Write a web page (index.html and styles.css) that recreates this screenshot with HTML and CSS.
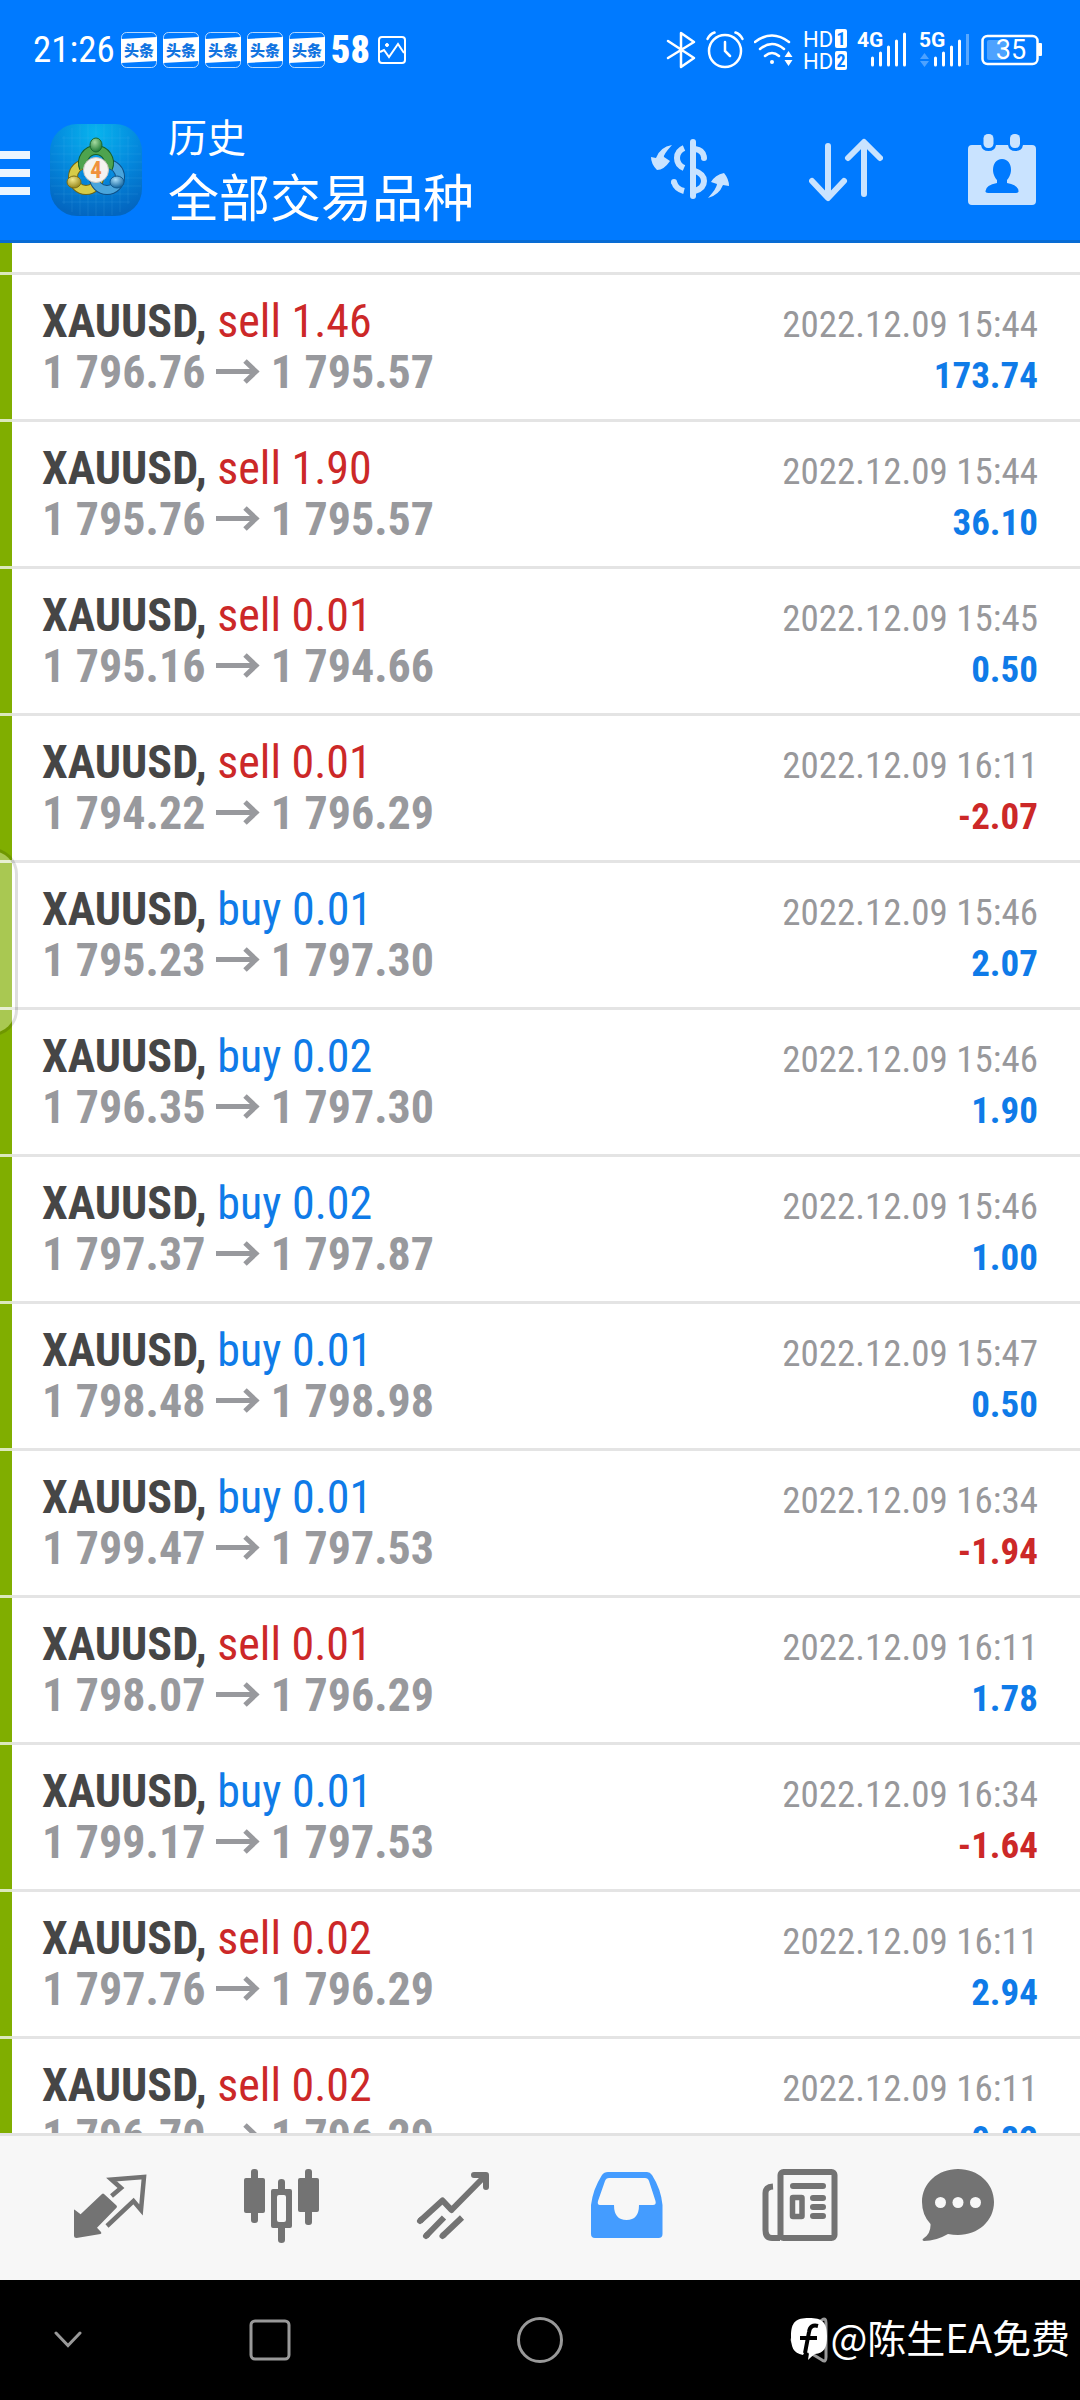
FILE: index.html
```html
<!DOCTYPE html>
<html lang="zh-CN">
<head>
<meta charset="utf-8">
<meta name="viewport" content="width=device-width, initial-scale=1">
<title>历史</title>
<link rel="stylesheet" href="styles.css">
</head>
<body>
<svg class="defs" aria-hidden="true">
  <symbol id="arrow" viewBox="0 0 44 30"><path d="M0 13.500H40M29 3L40 13.500L29 24" fill="none" stroke="currentColor" stroke-width="5"/></symbol>
  <symbol id="toutiao" viewBox="0 0 36 36">
    <rect x=".5" y=".5" width="35" height="35" rx="5" fill="none" stroke="#fff" stroke-opacity=".7"/>
    <path d="M0 7L36 5V29L0 31Z" fill="#fff"/>
    <text x="18" y="24" text-anchor="middle" class="toutiao-text">头条</text>
  </symbol>
</svg>

<div class="status">
  <span class="clock">21:26</span>
  <div class="notices">
    <svg width="36" height="36"><use href="#toutiao"/></svg>
    <svg width="36" height="36"><use href="#toutiao"/></svg>
    <svg width="36" height="36"><use href="#toutiao"/></svg>
    <svg width="36" height="36"><use href="#toutiao"/></svg>
    <svg width="36" height="36"><use href="#toutiao"/></svg>
    <span class="badge58">58</span>
    <svg width="28" height="28" viewBox="0 0 28 28" fill="none" stroke="#fff" stroke-width="2"><rect x="1" y="1" width="26" height="26" rx="3"/><path d="M2 16L6 14L11 21L20 8L26 17"/><circle cx="9" cy="9" r="1.500" fill="#fff" stroke-width="1"/></svg>
  </div>
  <div class="system">
    <svg width="30" height="40" viewBox="0 0 30 40" fill="none" stroke="#fff" stroke-width="2.500" stroke-linejoin="round" stroke-linecap="round"><path d="M2 11L28 28L15 37V3L28 12L2 28"/></svg>
    <svg width="38" height="40" viewBox="0 0 38 40" fill="none" stroke="#fff" stroke-width="2.500" stroke-linecap="round"><circle cx="19" cy="21" r="16"/><path d="M19 12V21L24 26M1.500 9Q4 4 8.500 2.500M36.500 9Q34 4 29.500 2.500"/></svg>
    <svg width="39" height="40" viewBox="0 0 39 40" fill="none" stroke="#fff" stroke-width="2.500" stroke-linecap="round"><path d="M1 12Q18 -1 35 12M6 19Q18 9 30 19M11 26Q18 20 25 26"/><circle cx="18" cy="32" r="2" fill="#fff" stroke="none"/><path d="M30.500 27L34.500 21L38.500 27ZM30.500 30L34.500 36L38.500 30Z" fill="#fff" stroke="none"/></svg>
    <svg width="44" height="42" viewBox="0 0 44 42"><rect x="32" y="0" width="12" height="19" rx="2" fill="#fff"/><rect x="32" y="22" width="12" height="19" rx="2" fill="#fff"/><text x="0" y="18" class="hd">HD</text><text x="0" y="40" class="hd">HD</text><text x="38" y="16" text-anchor="middle" class="hd-num">1</text><text x="38" y="38" text-anchor="middle" class="hd-num">2</text></svg>
    <svg width="52" height="40" viewBox="0 0 52 40"><text x="0" y="17" class="net">4G</text><path d="M15.500 28V35M23.500 23V35M31.500 17V35M39.500 11V35M47.500 4V35" stroke="#fff" stroke-width="3" stroke-linecap="round"/></svg>
    <svg width="52" height="40" viewBox="0 0 52 40"><text x="0" y="17" class="net">5G</text><path d="M1 29L5.500 23L10 29ZM1 31L5.500 37L10 31Z" fill="#fff" opacity=".3"/><path d="M16.500 28V35M24.500 23V35M32.500 17V35M40.500 11V35" stroke="#fff" stroke-width="3" stroke-linecap="round"/><path d="M48.500 4V35" stroke="#fff" stroke-width="3" opacity=".35"/></svg>
    <svg width="61" height="32" viewBox="0 0 61 32"><rect x="1.500" y="2" width="55" height="28" rx="5" fill="none" stroke="#fff" stroke-width="2.500"/><rect x="6" y="6" width="19" height="20" rx="2" fill="#fff" opacity=".3"/><rect x="57" y="9" width="4" height="13" rx="1" fill="#fff"/><text x="30" y="25" text-anchor="middle" class="battery">35</text></svg>
  </div>
</div>

<header class="header">
  <button class="menu" aria-label="菜单"><span></span><span></span><span></span></button>
  <svg class="logo" width="92" height="92" viewBox="0 0 92 92">
    <defs>
      <radialGradient id="bg" cx=".5" cy=".1" r=".9"><stop offset="0" stop-color="#08b4ee"/><stop offset=".55" stop-color="#0487dc"/><stop offset="1" stop-color="#0366c0"/></radialGradient>
      <radialGradient id="gh" cx=".4" cy=".3" r=".7"><stop offset="0" stop-color="#a5dba0"/><stop offset="1" stop-color="#1f7a35"/></radialGradient>
      <radialGradient id="yh" cx=".4" cy=".3" r=".7"><stop offset="0" stop-color="#f3e98c"/><stop offset="1" stop-color="#96861a"/></radialGradient>
      <radialGradient id="bh" cx=".4" cy=".3" r=".7"><stop offset="0" stop-color="#a8dcf8"/><stop offset="1" stop-color="#12659f"/></radialGradient>
    </defs>
    <rect width="92" height="92" rx="27" fill="url(#bg)"/>
    <path d="M14 12V80M22 4V88M30 1V91M38 0V92M46 0V92M54 0V92M62 1V91M70 4V88M78 12V80M12 14H80M4 22H88M1 30H91M0 38H92M0 46H92M0 54H92M1 62H91M4 70H88M12 78H80" stroke="#5cc4f5" stroke-opacity=".15" fill="none"/>
    <g fill="none">
      <circle cx="36" cy="53" r="13" stroke="#6f6512" stroke-width="10"/><circle cx="36" cy="53" r="13" stroke="#d6cc48" stroke-width="8"/>
      <circle cx="57" cy="53" r="13" stroke="#0f4f85" stroke-width="10"/><circle cx="57" cy="53" r="13" stroke="#4aa5dc" stroke-width="8"/>
      <path d="M34 44A13 13 0 1 1 58 44" stroke="#17602a" stroke-width="10"/><path d="M34 44A13 13 0 1 1 58 44" stroke="#4ea34e" stroke-width="8"/>
    </g>
    <circle cx="46" cy="46" r="12.500" fill="#f4f3f1" stroke="#c9c5c0"/>
    <ellipse cx="46" cy="21" rx="6" ry="7" fill="url(#gh)" stroke="#1c6a30"/>
    <ellipse cx="24" cy="58" rx="7" ry="6" fill="url(#yh)" stroke="#7b6e18"/>
    <ellipse cx="67" cy="58" rx="7" ry="6" fill="url(#bh)" stroke="#125a90"/>
    <text x="46" y="54" text-anchor="middle" class="logo-num">4</text>
  </svg>
  <div class="titles">
    <h1>历史</h1>
    <p>全部交易品种</p>
  </div>
  <div class="actions">
    <button aria-label="资金">
      <svg width="80" height="64" viewBox="0 0 80 64" fill="#c9e3ff"><path d="M22 7Q13 17 14 19L20 23Q14 32 7 32Q1 26 1 19L6 20Q10 9 22 7ZM58 60Q67 50 67 46L61 44Q65 37 74 35Q79 41 79 48L73 47Q69 57 58 60Z"/><g fill="none" stroke="#c9e3ff" stroke-width="6"><path d="M43 4V58" stroke-linecap="round"/><path d="M34 10Q27 13 27 20Q27 27 34 30M45 11Q53 12 54 19" /><path d="M24 44Q26 51 34 53M45 33Q54 36 54 43Q54 50 45 53"/></g><circle cx="54" cy="20" r="3"/><circle cx="24" cy="44" r="3"/></svg>
    </button>
    <button aria-label="排序">
      <svg width="74" height="64" viewBox="0 0 74 64" fill="none" stroke="#c9e3ff" stroke-width="6" stroke-linecap="round" stroke-linejoin="round"><path d="M19 8V59M3 43L19 60L35 43M55 56V5M39 20L55 4L71 20"/></svg>
    </button>
    <button aria-label="日期">
      <svg width="68" height="72" viewBox="0 0 68 72"><path d="M4 11H13Q14 17 20.500 17Q27 17 28 11H40Q41 17 47.500 17Q54 17 55 11H64Q68 11 68 15V67Q68 71 64 71H4Q0 71 0 67V15Q0 11 4 11Z" fill="#c9e3ff"/><rect x="15.500" y="0" width="10" height="14" rx="4.500" fill="#c9e3ff"/><rect x="42" y="0" width="10" height="14" rx="4.500" fill="#c9e3ff"/><path d="M34 25C40 25 43 30 43 36C43 41 40 45 39 46V49Q50 51 50.500 57Q51 59 48 59H20Q17 59 17.500 57Q18 51 29 49V46C28 45 25 41 25 36C25 30 28 25 34 25Z" fill="#007aff"/></svg>
    </button>
  </div>
</header>

<main class="history">
  <ul class="deals">
    <li><div class="line"><b>XAUUSD, <span class="sell">sell 1.46</span></b><time>2022.12.09 15:44</time></div><div class="line"><span class="prices">1 796.76 <svg><use href="#arrow"/></svg> 1 795.57</span><span class="profit">173.74</span></div></li>
    <li><div class="line"><b>XAUUSD, <span class="sell">sell 1.90</span></b><time>2022.12.09 15:44</time></div><div class="line"><span class="prices">1 795.76 <svg><use href="#arrow"/></svg> 1 795.57</span><span class="profit">36.10</span></div></li>
    <li><div class="line"><b>XAUUSD, <span class="sell">sell 0.01</span></b><time>2022.12.09 15:45</time></div><div class="line"><span class="prices">1 795.16 <svg><use href="#arrow"/></svg> 1 794.66</span><span class="profit">0.50</span></div></li>
    <li><div class="line"><b>XAUUSD, <span class="sell">sell 0.01</span></b><time>2022.12.09 16:11</time></div><div class="line"><span class="prices">1 794.22 <svg><use href="#arrow"/></svg> 1 796.29</span><span class="profit loss">-2.07</span></div></li>
    <li><div class="line"><b>XAUUSD, <span class="buy">buy 0.01</span></b><time>2022.12.09 15:46</time></div><div class="line"><span class="prices">1 795.23 <svg><use href="#arrow"/></svg> 1 797.30</span><span class="profit">2.07</span></div></li>
    <li><div class="line"><b>XAUUSD, <span class="buy">buy 0.02</span></b><time>2022.12.09 15:46</time></div><div class="line"><span class="prices">1 796.35 <svg><use href="#arrow"/></svg> 1 797.30</span><span class="profit">1.90</span></div></li>
    <li><div class="line"><b>XAUUSD, <span class="buy">buy 0.02</span></b><time>2022.12.09 15:46</time></div><div class="line"><span class="prices">1 797.37 <svg><use href="#arrow"/></svg> 1 797.87</span><span class="profit">1.00</span></div></li>
    <li><div class="line"><b>XAUUSD, <span class="buy">buy 0.01</span></b><time>2022.12.09 15:47</time></div><div class="line"><span class="prices">1 798.48 <svg><use href="#arrow"/></svg> 1 798.98</span><span class="profit">0.50</span></div></li>
    <li><div class="line"><b>XAUUSD, <span class="buy">buy 0.01</span></b><time>2022.12.09 16:34</time></div><div class="line"><span class="prices">1 799.47 <svg><use href="#arrow"/></svg> 1 797.53</span><span class="profit loss">-1.94</span></div></li>
    <li><div class="line"><b>XAUUSD, <span class="sell">sell 0.01</span></b><time>2022.12.09 16:11</time></div><div class="line"><span class="prices">1 798.07 <svg><use href="#arrow"/></svg> 1 796.29</span><span class="profit">1.78</span></div></li>
    <li><div class="line"><b>XAUUSD, <span class="buy">buy 0.01</span></b><time>2022.12.09 16:34</time></div><div class="line"><span class="prices">1 799.17 <svg><use href="#arrow"/></svg> 1 797.53</span><span class="profit loss">-1.64</span></div></li>
    <li><div class="line"><b>XAUUSD, <span class="sell">sell 0.02</span></b><time>2022.12.09 16:11</time></div><div class="line"><span class="prices">1 797.76 <svg><use href="#arrow"/></svg> 1 796.29</span><span class="profit">2.94</span></div></li>
    <li><div class="line"><b>XAUUSD, <span class="sell">sell 0.02</span></b><time>2022.12.09 16:11</time></div><div class="line"><span class="prices">1 796.70 <svg><use href="#arrow"/></svg> 1 796.29</span><span class="profit">0.82</span></div></li>
  </ul>
  <div class="handle"></div>
</main>

<nav class="tabs">
  <button aria-label="行情"><svg viewBox="0 0 96 96"><path d="M12 50.500Q12 49 13 50L18.600 54.300L40 34Q41 33 42 34L54.500 45.500Q55.500 46.700 54.500 47.700L35 67.700L39 72Q40 73.500 38.500 74L14.500 78Q12 78 12 76Z" fill="currentColor"/><path d="M49.500 36L59 28L49.500 19.500L82 17L79 50L71.500 41L45 66" fill="none" stroke="currentColor" stroke-width="4.500"/></svg></button>
  <button aria-label="图表"><svg viewBox="0 0 96 96" fill="currentColor"><rect x="10" y="18" width="21" height="35" rx="2"/><rect x="17" y="9" width="7" height="54" rx="3"/><path fill-rule="evenodd" d="M39 29H56Q58 29 58 31V66Q58 68 56 68H39Q37 68 37 66V31Q37 29 39 29ZM45 35Q43 35 43 37V60Q43 62 45 62H50Q52 62 52 60V37Q52 35 50 35Z"/><path d="M44 30V22Q44 19 47.500 19Q51 19 51 22V30ZM44 67V80Q44 83 47.500 83Q51 83 51 80V67Z"/><rect x="64" y="18" width="21" height="34" rx="2"/><rect x="71" y="9" width="7" height="56" rx="3"/></svg></button>
  <button aria-label="交易"><svg viewBox="0 0 96 96" fill="none" stroke="currentColor" stroke-width="6"><path d="M14 61L36.500 40.500L45.500 50L79 16" stroke-linejoin="round"/><path d="M14 61L15 60M68 15H80V27M20 76L21 75M36.500 76L37.500 75" stroke-linecap="round" stroke-linejoin="round"/><path d="M20 76L38 57.500M36.500 76L56 57.500"/></svg></button>
  <button class="active" aria-label="历史" aria-current="page"><svg viewBox="0 0 96 96"><path fill="currentColor" fill-rule="evenodd" d="M30 12H69Q72 12 74 15Q83 29 84.500 45V74Q84.500 78 80.500 78H17Q13 78 13 74V45Q15 29 24 15Q26 12 30 12ZM31 18Q28 18 27 21L20 41Q19 45 22 45H36Q36 60 48.500 60Q61 60 61 45H75Q78.500 45 77.500 41L71 21Q70 18 67 18Z"/></svg></button>
  <button aria-label="新闻"><svg viewBox="0 0 96 96" fill="none" stroke="currentColor" stroke-width="6"><rect x="30.500" y="12" width="54" height="66" rx="3"/><path d="M23 26.500Q15.500 27 15.500 33V70Q15.500 78 22 78H30"/><path d="M43 26H73M63 38H73M63 47H73M63 56H73" stroke-linecap="round"/><rect x="42.500" y="37.500" width="9.500" height="19" rx=".5" stroke-width="5.500"/></svg></button>
  <button aria-label="消息"><svg viewBox="0 0 96 96"><path fill="currentColor" d="M36 9C56 9 72 23 72 42C72 61 56 75 36 75Q31 75 26 74Q14 81 2 81Q-1 80 2 78Q9 73 8.500 64Q0 55 0 42C0 23 16 9 36 9Z"/><g fill="#f7f7f7"><circle cx="18.500" cy="42.500" r="5.500"/><circle cx="36" cy="42.500" r="5.500"/><circle cx="53.500" cy="42.500" r="5.500"/></g></svg></button>
</nav>

<footer class="sysnav">
  <button aria-label="收起"><svg width="28" height="18" viewBox="0 0 28 18"><path d="M2 2L14 14.500L26 2"/></svg></button>
  <button aria-label="最近"><svg width="42" height="42" viewBox="0 0 42 42"><rect x="2" y="2" width="38" height="38" rx="4"/></svg></button>
  <button aria-label="主页"><svg width="48" height="48" viewBox="0 0 48 48"><circle cx="24" cy="24" r="21.500"/></svg></button>
  <button aria-label="返回"><svg width="42" height="48" viewBox="0 0 42 48"><path d="M33 4Q37 1 37 7V41Q37 47 33 44L5 27Q1 24 5 21Z"/></svg></button>
  <div class="watermark">
    <svg width="38" height="44" viewBox="0 0 38 44"><path d="M19 1C32 1 37 5 37 19C37 31 34 36 25 37Q22 39 18 43L19 36L15 34L13 38C3 36 1 30 1 19C1 5 6 1 19 1Z" fill="#fff"/><path d="M28 9Q20 7 19 15L15 36M10 21H27" fill="none" stroke="#000" stroke-width="4"/></svg>
    <span>@陈生EA免费</span>
  </div>
</footer>
</body>
</html>
```
FILE: styles.css
```css
* { box-sizing: border-box; margin: 0; padding: 0; }

body {
  display: flex;
  flex-direction: column;
  height: 100vh;
  overflow: hidden;
  background: #fff;
  font-family: "Roboto Condensed", Roboto, "Noto Sans CJK SC", sans-serif;
}

svg { display: block; flex: none; }
button { border: 0; background: none; color: inherit; display: flex; align-items: center; justify-content: center; }
.defs { display: none; }

/* status bar */
.status {
  display: flex;
  align-items: center;
  flex: none;
  height: 99px;
  padding: 0 38px 0 33px;
  background: #007aff;
  color: #fff;
}
.clock { width: 88px; font-size: 37px; line-height: 44px; }
.notices { display: flex; align-items: center; gap: 6px; }
.badge58 { width: 41px; font-size: 38px; line-height: 44px; font-weight: 900; }
.system { display: flex; align-items: center; gap: 10px; margin-left: auto; }
.toutiao-text { font: 900 15px "Noto Sans CJK SC", sans-serif; fill: #1173e0; }
.hd { font: 400 22px Roboto, sans-serif; fill: #fff; }
.hd-num { font: 700 18px "Roboto Condensed", sans-serif; fill: #007aff; }
.net { font: 700 21px Roboto, sans-serif; fill: #fff; }
.battery { font: 400 27px Roboto, sans-serif; fill: #fff; }

/* app header */
.header {
  display: flex;
  align-items: center;
  flex: none;
  height: 144px;
  border-bottom: 3px solid #086cd4;
  background: #007aff;
  color: #fff;
}
.menu { flex-direction: column; gap: 10px; width: 30px; padding-top: 6px; }
.menu span { width: 100%; height: 8px; background: #ebf5ff; }
.logo { margin-left: 20px; }
.logo-num { font: 700 23px "Roboto Condensed", sans-serif; fill: #f0913c; }
.titles { margin: 0 0 10px 26px; font-family: "Noto Sans CJK SC", sans-serif; line-height: 60px; }
.titles h1 { font-size: 39px; line-height: 60px; font-weight: 400; }
.titles p { font-size: 51px; font-weight: 400; }
.actions { display: flex; margin-left: auto; }
.actions button { width: 156px; height: 96px; }

/* deal list */
.history {
  position: relative;
  flex: 1;
  min-height: 0;
  overflow: hidden;
  background: linear-gradient(to right, #80ae00 12px, #fff 12px);
}
.deals { list-style: none; padding-top: 29px; }
.deals li {
  padding: 21px 42px;
  border-top: 3px solid transparent;
  background: linear-gradient(to right, #dce8bd 12px, #e4e4e4 12px) border-box top / 100% 3px no-repeat;
}
.line { display: flex; justify-content: space-between; align-items: baseline; height: 51px; line-height: 51px; font-size: 46px; }
.line b { color: #464646; }
.line b span { font-weight: 400; }
.line .sell { color: #cc2828; }
.line .buy { color: #0f7be8; }
.line time { font-size: 37px; line-height: 45px; color: #98989b; }
.prices { font-weight: 700; color: #98999d; }
.prices svg { display: inline-block; width: 44px; height: 30px; vertical-align: baseline; }
.profit { font-size: 37px; line-height: 45px; font-weight: 700; color: #0f7be8; }
.profit.loss { color: #cc2828; }
.handle {
  position: absolute;
  top: 32%;
  left: -34px;
  width: 52px;
  height: 188px;
  border: 3px solid rgba(0, 0, 0, .13);
  border-radius: 26px;
  background: rgba(255, 255, 255, .32);
  background-clip: padding-box;
}

/* tab bar */
.tabs {
  display: grid;
  grid-template-columns: repeat(6, 1fr);
  flex: none;
  height: 147px;
  padding: 0 24px;
  border-top: 3px solid #e2e2e2;
  background: #f7f7f7;
  color: #737373;
}
.tabs svg { width: 96px; height: 96px; }
.tabs .active { color: #449cff; }

/* phone navigation */
.sysnav {
  position: relative;
  display: grid;
  grid-template-columns: 1fr 2fr 2fr 2fr 1fr;
  flex: none;
  height: 120px;
  background: #000;
}
.sysnav button svg { fill: none; stroke: #999; stroke-width: 3; stroke-linecap: round; }
.watermark {
  position: absolute;
  right: 10px;
  bottom: 34px;
  display: flex;
  align-items: center;
  gap: 2px;
  color: #fff;
  font: 400 39px/60px "Noto Sans CJK SC", sans-serif;
}
.watermark svg { margin-top: 6px; }
```
